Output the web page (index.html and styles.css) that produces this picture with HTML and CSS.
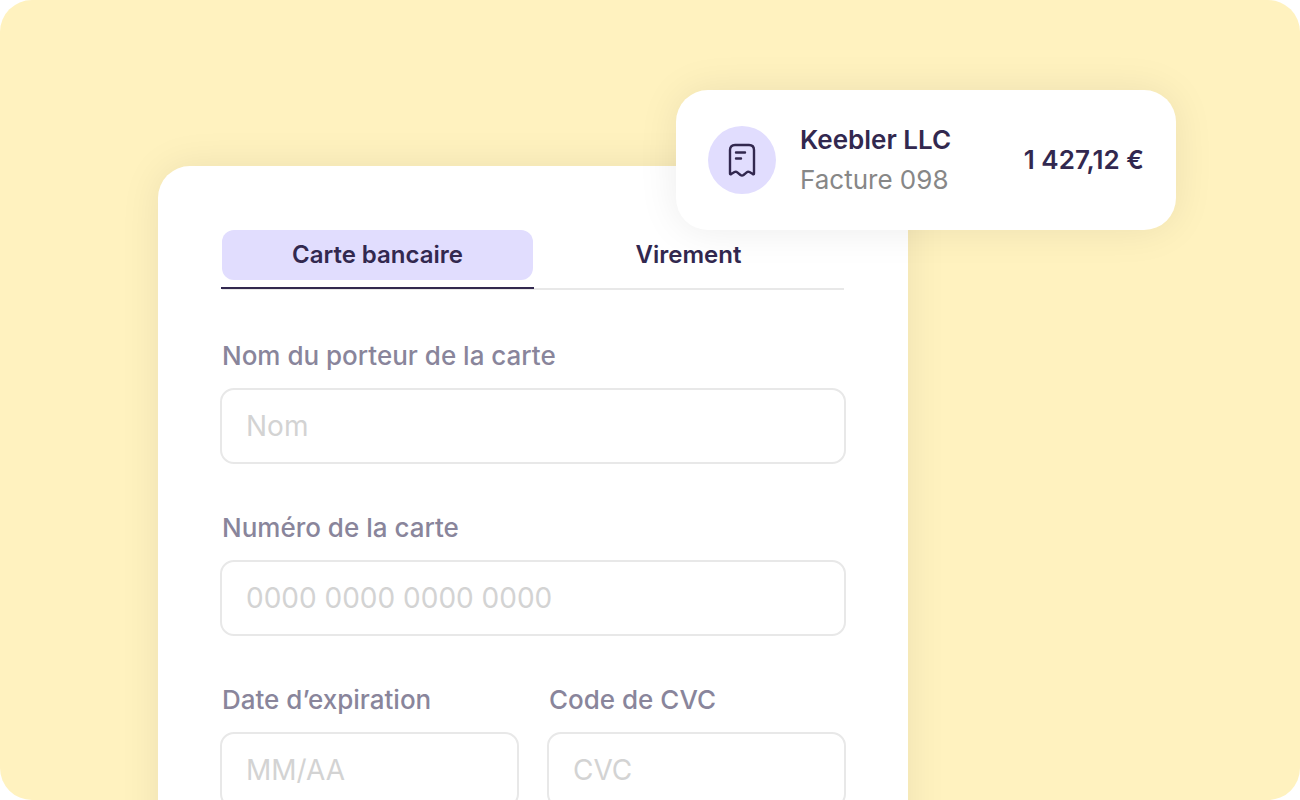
FILE: index.html
```html
<!DOCTYPE html>
<html lang="fr">

<head>
    <meta charset="utf-8">
    <meta name="viewport" content="width=device-width, initial-scale=1.0">
    <title>Paiement</title>
    <link rel="stylesheet" href="styles.css">
</head>

<body>
    <main class="stage">
        <form class="form" action="#" method="post">
            <div class="tabs" role="tablist">
                <button class="tabs__item tabs__item--active" type="button" role="tab" aria-selected="true">Carte bancaire</button>
                <button class="tabs__item" type="button" role="tab" aria-selected="false">Virement</button>
            </div>
            <div class="form__group">
                <label class="form__label" for="holder">Nom du porteur de la carte</label>
                <input type="text" name="holder" id="holder" class="form__input" placeholder="Nom">
            </div>
            <div class="form__group">
                <label class="form__label" for="number">Numéro de la carte</label>
                <input type="text" name="number" id="number" class="form__input" placeholder="0000 0000 0000 0000">
            </div>
            <div class="form__row">
                <div class="form__group">
                    <label class="form__label" for="expiry">Date d’expiration</label>
                    <input type="text" name="expiry" id="expiry" class="form__input" placeholder="MM/AA">
                </div>
                <div class="form__group">
                    <label class="form__label" for="cvc">Code de CVC</label>
                    <input type="text" name="cvc" id="cvc" class="form__input" placeholder="CVC">
                </div>
            </div>
        </form>

        <aside class="invoice">
            <span class="invoice__icon">
                <svg width="28" height="34" viewBox="0 0 28 34" fill="none" stroke="currentColor" stroke-width="2.4" stroke-linecap="round" stroke-linejoin="round" aria-hidden="true">
                    <path d="M2 30.500V7Q2 2 7 2H21Q26 2 26 7V30.500Q26 31.800 24.800 31.100L21.500 29Q20 28.200 18.700 29.300L15.500 32Q14 33.100 12.500 32L9.300 29.300Q8 28.200 6.500 29L3.200 31.100Q2 31.800 2 30.500Z" />
                    <path d="M8 9.500H17M8 15.500H13" />
                </svg>
            </span>
            <div class="invoice__details">
                <strong class="invoice__name">Keebler LLC</strong>
                <span class="invoice__number">Facture 098</span>
            </div>
            <strong class="invoice__amount">1 427,12 €</strong>
        </aside>
    </main>
</body>

</html>
```
FILE: styles.css
```css
body {
    --color-primary: #32284f;
    --color-accent: #e1ddfe;
    --color-label: #89859b;
    --color-muted: #878787;
    --color-line: #e8e8e8;
    --color-placeholder: #d3d3d3;
    --shadow: 0 0 40px rgba(0, 0, 0, 0.08);
    margin: 0;
    background: #ffffff;
    color: var(--color-primary);
    font: 500 26px/32px Inter, sans-serif;
}

.stage {
    position: relative;
    display: grid;
    grid-template-columns: 158fr 750fr 392fr;
    height: 100vh;
    overflow: hidden;
    border-radius: 32px;
    background: #fff2bf;
}

.form {
    grid-column: 2;
    box-sizing: border-box;
    min-height: 100%;
    margin-top: 166px;
    padding: 64px 62px;
    border-radius: 32px;
    background: #ffffff;
    box-shadow: var(--shadow);
}

.tabs {
    display: flex;
    margin: 0 2px 50px;
    padding-bottom: 8px;
    border-bottom: 2px solid var(--color-line);
}

.tabs__item {
    position: relative;
    flex: 1;
    height: 50px;
    padding: 0;
    border: none;
    border-radius: 12px;
    background: none;
    color: inherit;
    font: 600 24px/32px Inter, sans-serif;
    cursor: pointer;
}

.tabs__item--active {
    background: var(--color-accent);
}

.tabs__item--active::after {
    content: "";
    position: absolute;
    right: -1px;
    bottom: -9px;
    left: -1px;
    height: 2px;
    background: var(--color-primary);
}

.form__group {
    margin-bottom: 48px;
}

.form__row {
    display: grid;
    grid-template-columns: 1fr 1fr;
    gap: 28px;
}

.form__label {
    display: block;
    margin: 0 2px 16px;
    color: var(--color-label);
    font-size: 26px;
}

.form__input {
    display: block;
    box-sizing: border-box;
    width: 100%;
    height: 76px;
    padding: 0 24px;
    border: 2px solid var(--color-line);
    border-radius: 14px;
    outline: none;
    background: #ffffff;
    color: var(--color-primary);
    font: 400 28px/32px Inter, sans-serif;
}

.form__input:focus {
    border-color: var(--color-primary);
}

.form__input::placeholder {
    color: var(--color-placeholder);
    opacity: 1;
}

.invoice {
    position: absolute;
    top: 90px;
    right: 124px;
    display: flex;
    align-items: center;
    gap: 24px;
    box-sizing: border-box;
    width: 500px;
    padding: 30px 32px;
    border-radius: 32px;
    background: #ffffff;
    box-shadow: var(--shadow);
}

.invoice__icon {
    display: flex;
    align-items: center;
    justify-content: center;
    width: 68px;
    height: 68px;
    border-radius: 50%;
    background: var(--color-accent);
}

.invoice__details {
    display: flex;
    flex-direction: column;
    line-height: 40px;
}

.invoice__name,
.invoice__amount {
    font-weight: 600;
}

.invoice__number {
    color: var(--color-muted);
    font-weight: 400;
}

.invoice__amount {
    margin-left: auto;
}
```
